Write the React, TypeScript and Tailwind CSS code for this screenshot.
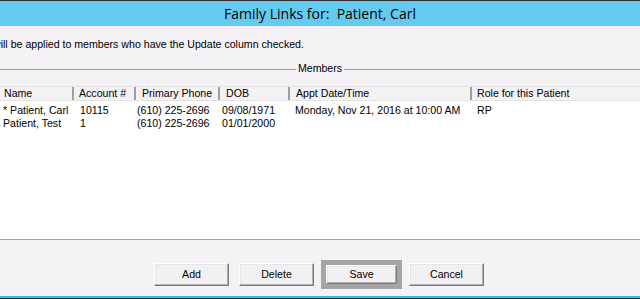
const columns = [
  { label: 'Name', width: 'w-[74px]', head: 'pl-[4px]', cell: 'pl-[3px]' },
  { label: 'Account #', width: 'w-[62px]', head: 'pl-[5px]', cell: 'pl-[6px]' },
  { label: 'Primary Phone', width: 'w-[84px]', head: 'pl-[6px]', cell: 'pl-[1px]' },
  { label: 'DOB', width: 'w-[70px]', head: 'pl-[6px]', cell: 'pl-[2px]' },
  { label: 'Appt Date/Time', width: 'w-[182px]', head: 'pl-[6px]', cell: 'pl-[5px]' },
  { label: 'Role for this Patient', width: 'flex-1', head: 'pl-[5px]', cell: 'pl-[5px]' },
]

const members = [
  ['* Patient, Carl', '10115', '(610) 225-2696', '09/08/1971', 'Monday, Nov 21, 2016 at 10:00 AM', 'RP'],
  ['Patient, Test', '1', '(610) 225-2696', '01/01/2000', '', ''],
]

const btnFace =
  'bg-[#f3f0f3] border border-t-white border-l-white border-r-[#7a7a7a] border-b-[#7a7a7a] ' +
  'shadow-[inset_-1px_-1px_0_#b0b0b0,inset_1px_1px_0_#e6e6e6] text-[10.6px] text-black'

export default function App() {
  return (
    <div
      className="w-[640px] h-[299px] overflow-hidden bg-[#f5f2f5] flex flex-col border-t border-[#2e2e2e] text-black"
      style={{ fontFamily: '"Liberation Sans", Arial, sans-serif' }}
    >
      {/* Title bar */}
      <div className="h-[25px] shrink-0 bg-[#64caef] border-b border-[#8fb8c8] flex items-center justify-center">
        <span className="text-[14px] whitespace-pre" style={{ fontFamily: '"Open Sans", "Noto Sans", sans-serif' }}>
          Family Links for:  Patient, Carl
        </span>
      </div>

      {/* Instruction */}
      <div className="h-[36px] shrink-0 flex items-center pt-[2px] text-[10.6px] whitespace-nowrap overflow-hidden">
        <span className="-ml-[7px]">will be applied to members who have the Update column checked.</span>
      </div>

      {/* Group box label */}
      <div className="h-[14px] shrink-0 flex items-center text-[10.6px]">
        <div className="flex-1 h-px bg-[#a0a0a0]" />
        <span className="px-[2px]">Members</span>
        <div className="flex-1 h-px bg-[#a0a0a0]" />
      </div>

      <div className="h-[10px] shrink-0" />

      {/* List */}
      <div className="h-[154px] shrink-0 flex flex-col bg-white border-b border-[#a0a0a0]">
        <div className="h-[15px] shrink-0 flex bg-[#f5f2f5] border-t border-[#e3e3e3] border-b border-[#8a8a8a] text-[10.6px]">
          {columns.map((c) => (
            <div
              key={c.label}
              className={`${c.width} ${c.head} flex items-center border-r-2 border-[#a0a0a0] last:border-r-0 whitespace-nowrap`}
            >
              {c.label}
            </div>
          ))}
        </div>
        <div className="pt-[3px]">
          {members.map((row) => (
            <div key={row[0]} className="h-[13px] flex text-[10.6px] leading-[13px]">
              {row.map((cell, i) => (
                <div key={i} className={`${columns[i].width} ${columns[i].cell} whitespace-nowrap`}>
                  {cell}
                </div>
              ))}
            </div>
          ))}
        </div>
      </div>

      {/* Buttons */}
      <div className="flex-1 flex items-center pl-[154px] pt-[13px]">
        <button className={`w-[75px] h-[23px] ${btnFace}`}>Add</button>
        <button className={`w-[75px] h-[23px] ml-[10px] ${btnFace}`}>Delete</button>
        <div className="ml-[7px] border-[5px] border-[#a5a5a5]">
          <button className={`w-[71px] h-[19px] block ${btnFace}`}>Save</button>
        </div>
        <button className={`w-[75px] h-[23px] ml-[7px] ${btnFace}`}>Cancel</button>
      </div>

      <div className="h-[2px] shrink-0 bg-[#45b6e6]" />
      <div className="h-px shrink-0 bg-[#2e2e2e]" />
    </div>
  )
}
